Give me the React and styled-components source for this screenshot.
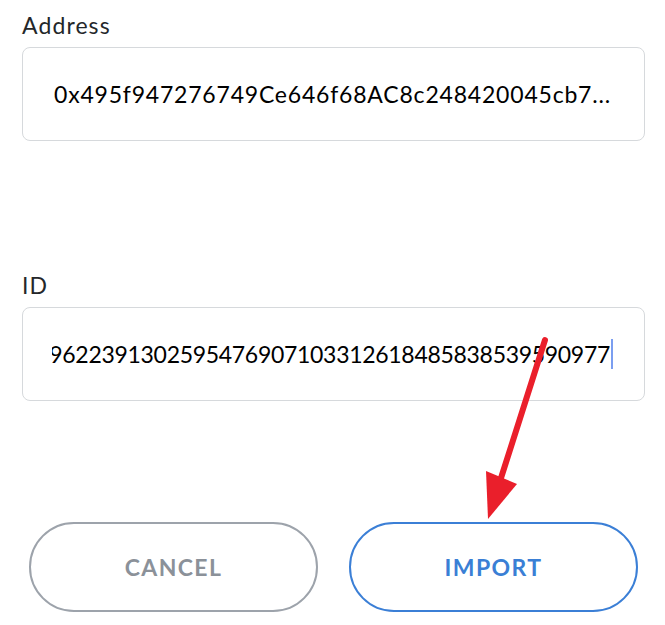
import React from "react";
import styled, { createGlobalStyle } from "styled-components";

const GlobalStyle = createGlobalStyle`
  html, body {
    margin: 0;
    padding: 0;
    background: #ffffff;
  }
  body {
    font-family: "Lato", "Liberation Sans", sans-serif;
    color: #24272a;
  }
`;

const ADDRESS = "0x495f947276749Ce646f68AC8c248420045cb7...";
const TOKEN_ID =
  "33139178283876264769622391302595476907103312618485838539590977";

function App() {
  return (
    <>
      <GlobalStyle />
      <Page>
        <Field gap={130}>
          <Label>Address</Label>
          <Box>
            <Viewport>
              <Value spacing={0.8}>{ADDRESS}</Value>
            </Viewport>
          </Box>
        </Field>
        <Field gap={121}>
          <Label>ID</Label>
          <Box>
            <Viewport end>
              <Value spacing={-0.3}>{TOKEN_ID}</Value>
              <Caret />
            </Viewport>
          </Box>
        </Field>
        <Actions>
          <PillButton>CANCEL</PillButton>
          <PillButton primary>IMPORT</PillButton>
        </Actions>
        <Pointer viewBox="0 0 665 625" width="665" height="625">
          <line
            x1="545"
            y1="340"
            x2="501"
            y2="478"
            stroke="#ea1f2b"
            strokeWidth="6"
            strokeLinecap="round"
          />
          <polygon points="486,471 517,484 488,519" fill="#ea1f2b" />
        </Pointer>
      </Page>
    </>
  );
}

export default App;

const Page = styled.div`
  position: relative;
  width: 665px;
  height: 625px;
  padding: 11px 20px 0 22px;
  box-sizing: border-box;
  overflow: hidden;
`;

const Field = styled.div`
  display: flex;
  flex-direction: column;
  gap: 8px;
  margin-bottom: ${(p) => p.gap}px;
`;

const Label = styled.div`
  font-size: 23px;
  line-height: 28px;
  letter-spacing: 1.1px;
  color: #24272a;
`;

const Box = styled.div`
  height: 94px;
  box-sizing: border-box;
  border: 1.5px solid #d6d9dc;
  border-radius: 8px;
  display: flex;
  align-items: center;
  padding: 0 31px 0 29px;
`;

const Viewport = styled.div`
  flex: 1;
  min-width: 0;
  overflow: hidden;
  display: flex;
  align-items: center;
  justify-content: ${(p) => (p.end ? "flex-end" : "flex-start")};
  padding-left: ${(p) => (p.end ? 0 : 2)}px;
`;

const Value = styled.span`
  flex-shrink: 0;
  white-space: nowrap;
  font-size: 23px;
  line-height: 32px;
  letter-spacing: ${(p) => p.spacing}px;
  color: #000000;
`;

const Caret = styled.span`
  flex-shrink: 0;
  width: 2px;
  height: 30px;
  margin-left: 1px;
  background: #7b9ef0;
`;

const Actions = styled.div`
  display: grid;
  grid-template-columns: 289px 289px;
  gap: 31px;
  padding-left: 7px;
`;

const PillButton = styled.button`
  height: 90px;
  border-radius: 45px;
  background: #ffffff;
  border: 2px solid ${(p) => (p.primary ? "#3b7fd6" : "#9da3ab")};
  color: ${(p) => (p.primary ? "#3a7fd5" : "#8b9199")};
  font-family: "Lato", "Liberation Sans", sans-serif;
  font-weight: 700;
  font-size: 23px;
  letter-spacing: 1.4px;
  cursor: pointer;
`;

const Pointer = styled.svg`
  position: absolute;
  left: 0;
  top: 0;
  pointer-events: none;
`;
